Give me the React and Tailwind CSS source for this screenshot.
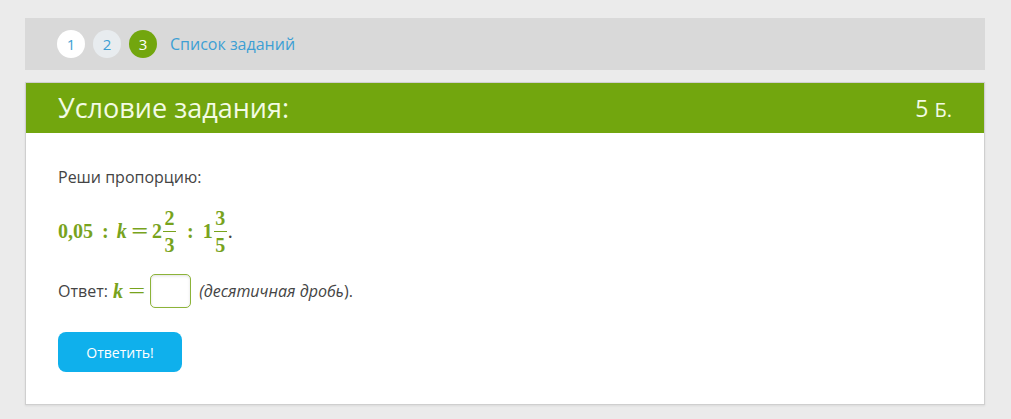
import React, { useState } from 'react';

function StepDot({ n, active, done }) {
  let cls = 'bg-white text-[#3d9fd4]';
  if (active) cls = 'bg-[#72a60e] text-white';
  else if (done) cls = 'bg-[#e8ecef] text-[#3d9fd4]';
  return (
    <span className={`w-7 h-7 rounded-full flex items-center justify-center text-[15px] ${cls}`}>
      {n}
    </span>
  );
}

function Frac({ top, bottom }) {
  return (
    <span className="inline-flex flex-col items-center align-middle leading-none mx-[1px] text-[20px]">
      <span className="pb-[3px]">{top}</span>
      <span className="border-t-[1.5px] border-[#78a31d] w-[13px]" />
      <span className="pt-[3px]">{bottom}</span>
    </span>
  );
}

export default function App() {
  const [answer, setAnswer] = useState('');

  return (
    <div className="min-h-[419px] bg-[#ebebeb] pt-[18px] px-[25px] font-['Open_Sans',sans-serif]">
      <div className="w-[960px]">
        {/* steps */}
        <div className="h-[52px] bg-[#d9d9d9] flex items-center pl-[32px] gap-2">
          <StepDot n={1} />
          <StepDot n={2} done />
          <StepDot n={3} active />
          <a href="#" className="ml-[5px] text-[16px] text-[#3d9fd4]">Список заданий</a>
        </div>

        {/* task card */}
        <div className="mt-3 border border-[#cfcfcf] shadow-[0_1px_2px_rgba(0,0,0,0.08)] bg-white">
          <div className="h-[50px] bg-[#72a60e] flex items-center justify-between pl-[32px] pr-[32px] text-[#f3fbe4]">
            <h1 className="text-[27px]">Условие задания:</h1>
            <span className="text-[23px]">5 <span className="text-[20px]">Б.</span></span>
          </div>

          <div className="pl-[32px] pt-[32px] pb-[32px] text-[#444]">
            <p className="text-[16px] leading-6">Реши пропорцию:</p>

            <div className="mt-[18px] font-['Liberation_Serif',serif] font-bold text-[#78a31d] text-[20px] flex items-center h-[48px]">
              <span>0,05</span>
              <span className="ml-[9px] mr-[8px]">:</span>
              <span className="italic">k</span>
              <span className="mx-[7px] scale-x-150 inline-block">=</span>
              <span>2</span>
              <Frac top="2" bottom="3" />
              <span className="ml-[10px] mr-[9px]">:</span>
              <span>1</span>
              <Frac top="3" bottom="5" />
              <span className="text-[#444] font-normal">.</span>
            </div>

            <div className="mt-[19px] flex items-center text-[16px]">
              <span>Ответ:</span>
              <span className="ml-[5px] font-['Liberation_Serif',serif] font-bold italic text-[#78a31d] text-[20px]">k</span>
              <span className="ml-[8px] font-['Liberation_Serif',serif] text-[#78a31d] text-[20px] scale-x-150 inline-block">=</span>
              <input
                value={answer}
                onChange={(e) => setAnswer(e.target.value)}
                className="ml-[8px] w-[41px] h-[34px] rounded-[5px] border border-[#8cb339] shadow-[inset_0_1px_3px_rgba(0,0,0,0.12)] outline-none px-1"
              />
              <span className="ml-[8px] italic">(десятичная дробь</span>
              <span>).</span>
            </div>

            <button className="mt-[24px] w-[124px] h-[40px] rounded-[8px] bg-[#0fb0ec] text-white text-[14px]">
              Ответить!
            </button>
          </div>
        </div>
      </div>
    </div>
  );
}
